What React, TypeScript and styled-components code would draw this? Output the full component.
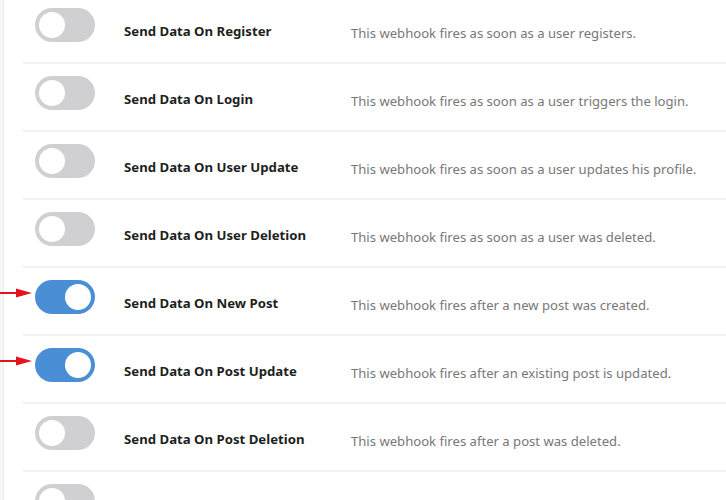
import React from 'react'
import styled, { createGlobalStyle } from 'styled-components'

interface Hook {
  title: string
  text: string
  on: boolean
  marked: boolean
}

const hooks: Hook[] = [
  { title: 'Send Data On Register', text: 'This webhook fires as soon as a user registers.', on: false, marked: false },
  { title: 'Send Data On Login', text: 'This webhook fires as soon as a user triggers the login.', on: false, marked: false },
  { title: 'Send Data On User Update', text: 'This webhook fires as soon as a user updates his profile.', on: false, marked: false },
  { title: 'Send Data On User Deletion', text: 'This webhook fires as soon as a user was deleted.', on: false, marked: false },
  { title: 'Send Data On New Post', text: 'This webhook fires after a new post was created.', on: true, marked: true },
  { title: 'Send Data On Post Update', text: 'This webhook fires after an existing post is updated.', on: true, marked: true },
  { title: 'Send Data On Post Deletion', text: 'This webhook fires after a post was deleted.', on: false, marked: false },
  { title: '', text: '', on: false, marked: false },
]

const GlobalStyle = createGlobalStyle`
  html, body {
    margin: 0;
    padding: 0;
    background: #ffffff;
    overflow: hidden;
  }
  body {
    font-family: "Noto Sans", "Open Sans", sans-serif;
  }
`

const App: React.FC = () => {
  return (
    <StyledPage>
      <GlobalStyle />
      <StyledEdge />
      <StyledList>
        {hooks.map((hook, i) => (
          <StyledRow key={i}>
            <StyledToggleCell>
              {hook.marked && (
                <StyledArrow width="34" height="12" viewBox="0 0 34 12">
                  <line x1="0" y1="6" x2="24" y2="6" stroke="#e3141b" strokeWidth="2" />
                  <path d="M17 1.5 L33 6 L17 10.5 Z" fill="#e3141b" />
                </StyledArrow>
              )}
              <StyledToggle on={hook.on}>
                <StyledKnob />
              </StyledToggle>
            </StyledToggleCell>
            {hook.title && <StyledTitle>{hook.title}</StyledTitle>}
            {hook.text && <StyledText>{hook.text}</StyledText>}
          </StyledRow>
        ))}
      </StyledList>
    </StyledPage>
  )
}

const StyledPage = styled.div`
  display: flex;
  width: 726px;
  height: 500px;
  overflow: hidden;
`

const StyledEdge = styled.div`
  flex: 0 0 3px;
  background: #f6f6f7;
  border-right: 1px solid #ececec;
`

const StyledList = styled.div`
  flex: 1;
  margin-left: 19px;
  margin-top: -4px;
`

const StyledRow = styled.div`
  display: flex;
  align-items: flex-start;
  height: 66px;
  padding-left: 12px;
  border-bottom: 2px solid #f1f1f2;
`

const StyledToggleCell = styled.div`
  position: relative;
  flex: 0 0 60px;
  margin-top: 12px;
`

const StyledArrow = styled.svg`
  position: absolute;
  right: 62px;
  top: 7px;
`

const StyledToggle = styled.div<{ on: boolean }>`
  display: flex;
  align-items: center;
  justify-content: ${(props) => (props.on ? 'flex-end' : 'flex-start')};
  width: 60px;
  height: 34px;
  padding: 0 4px;
  box-sizing: border-box;
  border-radius: 17px;
  background: ${(props) => (props.on ? '#4a8fd5' : '#d0d0d2')};
`

const StyledKnob = styled.div`
  width: 26px;
  height: 26px;
  border-radius: 50%;
  background: #ffffff;
`

const StyledTitle = styled.div`
  flex: 0 0 227px;
  margin-left: 29px;
  margin-top: 25px;
  font-size: 13.2px;
  line-height: 20px;
  font-weight: 700;
  color: #1d1f22;
`

const StyledText = styled.div`
  flex: 1;
  margin-top: 27px;
  font-size: 13.1px;
  line-height: 20px;
  color: #777779;
`

export default App
